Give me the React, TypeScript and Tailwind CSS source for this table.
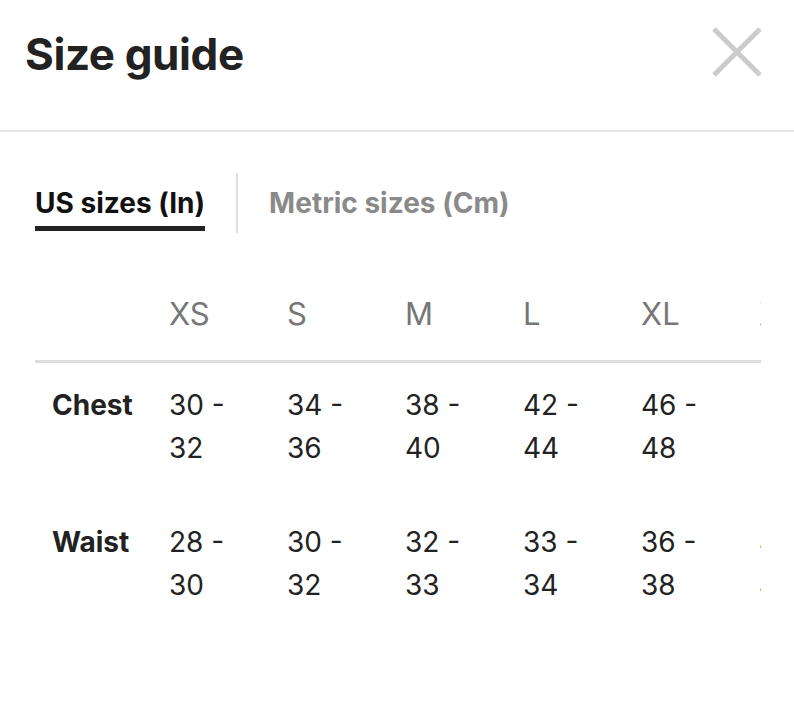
import { useState } from 'react';

// Size chart data (inches)
const sizes = ['XS', 'S', 'M', 'L', 'XL', 'XXL'];

const rows: { label: string; values: [string, string][] }[] = [
  {
    label: 'Chest',
    values: [['30', '32'], ['34', '36'], ['38', '40'], ['42', '44'], ['46', '48'], ['50', '52']],
  },
  {
    label: 'Waist',
    values: [['28', '30'], ['30', '32'], ['32', '33'], ['33', '34'], ['36', '38'], ['40', '42']],
  },
];

function CloseIcon() {
  return (
    <svg width="50" height="50" viewBox="0 0 50 50" fill="none" stroke="#cccccc" strokeWidth={5}>
      <path d="M2 2L48 48M48 2L2 48" />
    </svg>
  );
}

export default function App() {
  const [tab, setTab] = useState<'us' | 'metric'>('us');

  return (
    <div className="w-[794px] h-[701px] bg-white overflow-hidden font-['Inter',sans-serif] text-[#222]">
      {/* Header */}
      <div className="h-[132px] border-b-2 border-[#e6e6e6] flex items-start justify-between pl-[25px] pr-[32px]">
        <h1 className="mt-[26px] text-[44px] font-bold leading-[56px] tracking-[-0.4px]">Size guide</h1>
        <button className="mt-[27px]" aria-label="Close">
          <CloseIcon />
        </button>
      </div>

      {/* Tabs */}
      <div className="flex items-center mt-[41px] pl-[35px] h-[60px]">
        <button
          onClick={() => setTab('us')}
          className={`relative text-[28px] font-bold leading-[36px] ${tab === 'us' ? 'text-[#111]' : 'text-[#8a8a8a]'}`}
        >
          US sizes (In)
          {tab === 'us' && <span className="absolute left-0 right-0 -bottom-[10px] h-[5px] bg-[#222]" />}
        </button>
        <div className="w-[2px] h-[60px] bg-[#dddddd] mx-[31px]" />
        <button
          onClick={() => setTab('metric')}
          className={`relative text-[28px] font-bold leading-[36px] ${tab === 'metric' ? 'text-[#111]' : 'text-[#8a8a8a]'}`}
        >
          Metric sizes (Cm)
          {tab === 'metric' && <span className="absolute left-0 right-0 -bottom-[10px] h-[5px] bg-[#222]" />}
        </button>
      </div>

      {/* Table */}
      <div className="ml-[35px] w-[726px] overflow-hidden mt-[61px]">
        <table className="border-collapse table-fixed w-[842px]">
          <thead>
            <tr className="border-b-[3px] border-[#dedede]">
              <th className="w-[134px]" />
              {sizes.map((s) => (
                <th key={s} className="w-[118px] text-left font-normal text-[31px] text-[#777] leading-[40px] pb-[26px] align-top">
                  {s}
                </th>
              ))}
            </tr>
          </thead>
          <tbody>
            {rows.map((row) => (
              <tr key={row.label}>
                <td className="pl-[17px] pt-[21px] pb-[30px] align-top text-[28px] font-bold leading-[43px]">{row.label}</td>
                {row.values.map(([a, b], i) => (
                  <td key={i} className="pt-[21px] pb-[30px] align-top text-[28px] leading-[43px] text-[#222]">
                    <div>{a} -</div>
                    <div>{b}</div>
                  </td>
                ))}
              </tr>
            ))}
          </tbody>
        </table>
      </div>
    </div>
  );
}
